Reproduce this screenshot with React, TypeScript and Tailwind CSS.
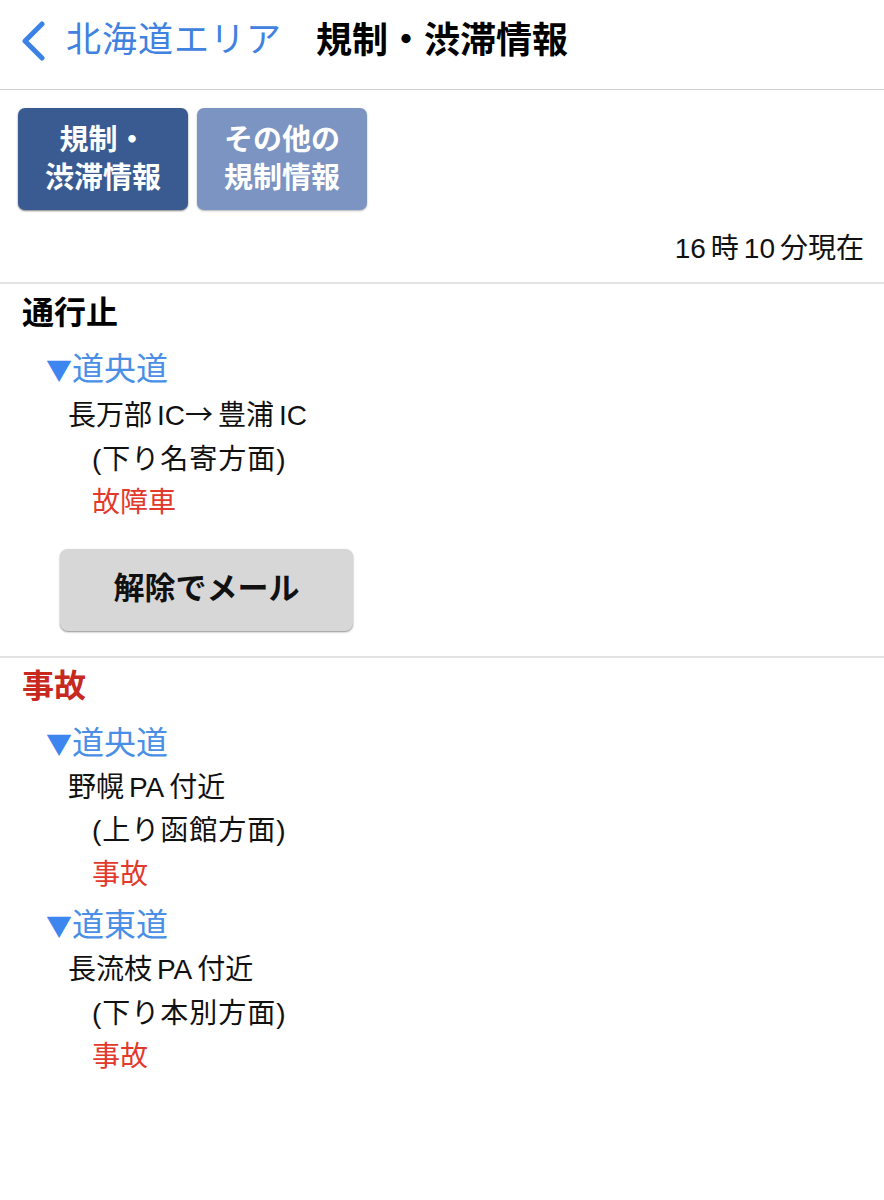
import React from 'react';

const font = { fontFamily: '"Liberation Sans", "Noto Sans CJK JP", sans-serif' };
const cjk = { fontFamily: '"Noto Sans CJK JP", sans-serif' };

// iOS puts a small gap between Latin runs and kana/kanji; mimic it
function Spaced({ text }: { text: string }) {
  const parts = text.split(/([A-Za-z0-9→]+)/).filter((p) => p !== '');
  return (
    <>
      {parts.map((p, i) =>
        /^[A-Za-z0-9→]+$/.test(p) ? (
          <span key={i} className={(i > 0 ? 'ml-[5px] ' : '') + (i < parts.length - 1 ? 'mr-[5px]' : '')}>
            {p.split('→').map((s, j) => (
              <React.Fragment key={j}>
                {j > 0 && <span style={cjk}>→</span>}
                {s}
              </React.Fragment>
            ))}
          </span>
        ) : (
          <span key={i}>{p}</span>
        )
      )}
    </>
  );
}

function Road({ name, items }: { name: string; items: { place: string; dir: string; cause: string }[] }) {
  return (
    <div>
      <div className="pl-[46px] text-[32px] leading-[46px] text-[#4a8fe6]">
        <span className="text-[#3d86f0] text-[26px]" style={cjk}>▼</span>
        {name}
      </div>
      {items.map((it) => (
        <div key={it.place} className="text-[28px] leading-[43.5px] text-[#111]">
          <div className="pl-[68px]">
            <Spaced text={it.place} />
          </div>
          <div className="pl-[92px] tracking-[1px]">{it.dir}</div>
          <div className="pl-[92px] text-[#e3392c]">{it.cause}</div>
        </div>
      ))}
    </div>
  );
}

export default function App() {
  return (
    <div className="w-[884px] h-[1200px] bg-white" style={font}>
      {/* header */}
      <div className="h-[90px] pb-[8px] flex items-center border-b border-[#cfcfcf]">
        <svg className="ml-[18px] mr-[18px]" width="30" height="40" viewBox="0 0 30 40">
          <path d="M24 3 L7 20 L24 37" fill="none" stroke="#3c82e6" strokeWidth="5" strokeLinecap="round" strokeLinejoin="round" />
        </svg>
        <span className="text-[35px] text-[#3f82e0] tracking-[1px]">北海道エリア</span>
        <span className="ml-[34px] text-[36px] font-bold text-black">規制・渋滞情報</span>
      </div>

      {/* tabs */}
      <div className="flex gap-[9px] pl-[18px] pt-[18px]">
        <div className="w-[170px] h-[102px] rounded-[7px] bg-[#3a5b92] shadow-[0_1px_2px_rgba(0,0,0,0.5)] flex flex-col items-center justify-center text-white font-bold text-[29px] leading-[38px]">
          <span>規制・</span>
          <span>渋滞情報</span>
        </div>
        <div className="w-[170px] h-[102px] rounded-[7px] bg-[#7b94c2] shadow-[0_1px_2px_rgba(0,0,0,0.3)] flex flex-col items-center justify-center text-white font-bold text-[29px] leading-[38px]">
          <span>その他の</span>
          <span>規制情報</span>
        </div>
      </div>

      <div className="flex justify-end pr-[20px] pt-[18px] pb-[12px] text-[28px] leading-[42px] text-[#111]">
        <Spaced text="16時10分現在" />
      </div>

      {/* 通行止 */}
      <div className="border-t-2 border-[#e2e2e2] pb-[25px]">
        <div className="pl-[22px] pt-[7px] text-[32px] leading-[44px] font-bold text-black">通行止</div>
        <div className="pt-[11px]">
          <Road name="道央道" items={[{ place: '長万部IC→豊浦IC', dir: '(下り名寄方面)', cause: '故障車' }]} />
        </div>
        <div className="pl-[60px] pt-[24px]">
          <div className="w-[293px] h-[82px] rounded-[8px] bg-[#d7d7d7] shadow-[0_1px_2px_rgba(0,0,0,0.45)] flex items-center justify-center text-[31px] font-bold text-[#111]">
            解除でメール
          </div>
        </div>
      </div>

      {/* 事故 */}
      <div className="border-t-2 border-[#e2e2e2]">
        <div className="pl-[22px] pt-[4px] text-[32px] leading-[48px] font-bold text-[#c8291f]">事故</div>
        <div className="pt-[10px]">
          <Road name="道央道" items={[{ place: '野幌PA付近', dir: '(上り函館方面)', cause: '事故' }]} />
          <div className="pt-[6px]">
            <Road name="道東道" items={[{ place: '長流枝PA付近', dir: '(下り本別方面)', cause: '事故' }]} />
          </div>
        </div>
      </div>
    </div>
  );
}
